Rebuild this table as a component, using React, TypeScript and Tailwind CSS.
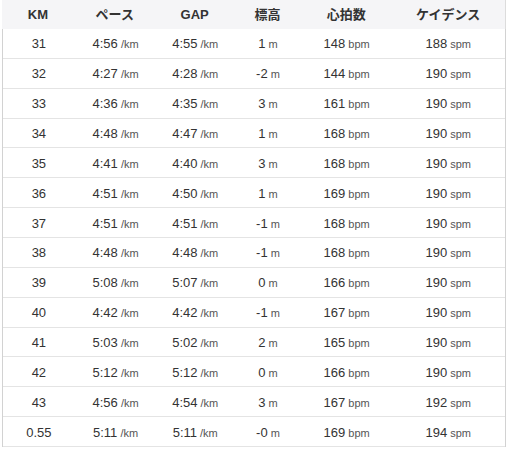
import React from "react";

const rows: [string, string, string, string, string, string][] = [
  ["31", "4:56", "4:55", "1", "148", "188"],
  ["32", "4:27", "4:28", "-2", "144", "190"],
  ["33", "4:36", "4:35", "3", "161", "190"],
  ["34", "4:48", "4:47", "1", "168", "190"],
  ["35", "4:41", "4:40", "3", "168", "190"],
  ["36", "4:51", "4:50", "1", "169", "190"],
  ["37", "4:51", "4:51", "-1", "168", "190"],
  ["38", "4:48", "4:48", "-1", "168", "190"],
  ["39", "5:08", "5:07", "0", "166", "190"],
  ["40", "4:42", "4:42", "-1", "167", "190"],
  ["41", "5:03", "5:02", "2", "165", "190"],
  ["42", "5:12", "5:12", "0", "166", "190"],
  ["43", "4:56", "4:54", "3", "167", "192"],
  ["0.55", "5:11", "5:11", "-0", "169", "194"],
];

const widths = ["w-[72px]", "w-[82px]", "w-[78px]", "w-[68px]", "w-[90px]", "w-[114px]"];
const headers = ["KM", "ペース", "GAP", "標高", "心拍数", "ケイデンス"];
const units = ["", "/km", "/km", "m", "bpm", "spm"];

function Val({ v, u }: { v: string; u: string }) {
  return (
    <span>
      <span className="text-[13px]">{v}</span>
      {u && <span className="text-[11px] text-[#555]"> {u}</span>}
    </span>
  );
}

export default function App() {
  return (
    <div
      className="w-[508px] h-[450px] bg-white text-[#333] overflow-hidden"
      style={{ fontFamily: '"Liberation Sans", "Noto Sans CJK JP", sans-serif' }}
    >
      <div className="ml-[2px] w-[504px]">
        <div className="flex h-[29px] bg-[#f5f5f7] border-r border-[#dcdcdc]">
          {headers.map((h, i) => (
            <div
              key={h}
              className={`${widths[i]} flex items-center justify-center text-[13px] font-bold text-[#333]`}
            >
              {h}
            </div>
          ))}
        </div>
        <div className="border-l border-r border-[#d2d2d2]">
          {rows.map((r, ri) => (
            <div key={ri} className="flex h-[29.86px] border-b border-[#e4e4e4] items-center">
              {r.map((c, i) => (
                <div key={i} className={`${widths[i]} flex items-center justify-center`}>
                  <Val v={c} u={units[i]} />
                </div>
              ))}
            </div>
          ))}
        </div>
      </div>
    </div>
  );
}
